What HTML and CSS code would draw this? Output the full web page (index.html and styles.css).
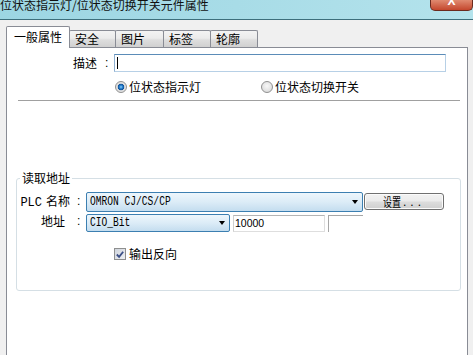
FILE: index.html
```html
<!DOCTYPE html>
<html lang="zh">
	<head>
		<meta charset="UTF-8">
		<title>位状态指示灯/位状态切换开关元件属性</title>
		<link rel="stylesheet" href="styles.css">
	</head>
	<body>
		<!--标题栏-->
		<div class="titlebar">
			<span class="title">位状态指示灯/位状态切换开关元件属性</span>
			<span class="close"><span>X</span></span>
		</div>

		<!--选项卡-->
		<div class="tabs">
			<div class="tab active">一般属性</div>
			<div class="tab t47">安全</div>
			<div class="tab t49">图片</div>
			<div class="tab t48">标签</div>
			<div class="tab t48">轮廓</div>
		</div>

		<div class="panel">
			<div class="row desc-row">
				<div class="lbl lbl-desc"><span class="lbl-text">描述</span><span class="colon">:</span></div>
				<div class="textbox"><span class="caret"></span></div>
			</div>

			<div class="row radio-row">
				<label class="radio-item first"><span class="radio checked"></span>位状态指示灯</label>
				<label class="radio-item second"><span class="radio"></span>位状态切换开关</label>
			</div>

			<div class="sep"></div>

			<fieldset class="group">
				<legend>读取地址</legend>
				<div class="row plc-row">
					<div class="lbl"><span class="lbl-text name"><span class="mono">PLC</span>名称</span><span class="colon">:</span></div>
					<div class="combo wide"><span class="combo-text">OMRON CJ/CS/CP</span><span class="arrow"></span></div>
					<div class="btn"><span class="btn-text">设置</span><span class="dots">...</span></div>
				</div>
				<div class="row addr-row">
					<div class="lbl"><span class="lbl-text addr">地址</span><span class="colon">:</span></div>
					<div class="combo narrow"><span class="combo-text">CIO_Bit</span><span class="arrow"></span></div>
					<div class="numbox">10000</div>
					<div class="stub"></div>
				</div>
				<label class="check-row"><span class="checkbox"><svg width="11" height="11" viewBox="0 0 11 11"><path d="M2 5.5 L4.5 8 L9 2.5" fill="none" stroke="#3b4f86" stroke-width="2"/></svg></span>输出反向</label>
			</fieldset>
		</div>
	</body>
</html>
```
FILE: styles.css
```css
* {
	margin: 0;
	padding: 0;
	box-sizing: border-box;
}

body {
	width: 473px;
	height: 355px;
	overflow: hidden;
	background-color: #f0f0f0;
	font: 12px "Noto Sans CJK SC", sans-serif;
	color: #000;
}

/* 标题栏 */
.titlebar {
	display: flex;
	justify-content: space-between;
	height: 20px;
	border-bottom: 1px solid #3d6f7c;
	background: linear-gradient(90deg, #9cd6e3, #a8dce7 50%, #b4e3ec);
	overflow: hidden;
}

.title {
	line-height: 12px;
	margin-top: -1px;
	color: #111;
}

.close {
	display: flex;
	justify-content: center;
	width: 43px;
	height: 11px;
	border: 1px solid #6b2a1e;
	border-top: none;
	border-radius: 0 0 5px 5px;
	background: linear-gradient(#e08a70, #c4472d);
	color: #fff;
	overflow: hidden;
}

.close span {
	font: bold 12px "Liberation Sans", sans-serif;
	line-height: 10px;
	margin-top: -4px;
}

/* 选项卡 */
.tabs {
	display: flex;
	align-items: flex-end;
	height: 27px;
	padding-left: 6px;
}

.tab {
	height: 17px;
	margin-left: -1px;
	padding: 1px 0 0 5px;
	line-height: 14px;
	border: 1px solid #898c95;
	border-bottom: none;
	border-radius: 2px 2px 0 0;
	background: linear-gradient(#f3f3f3, #ebebeb 45%, #dedede 55%, #d0d0d0);
}

.tab.active {
	position: relative;
	z-index: 1;
	width: 64px;
	height: 22px;
	margin: 0 0 -1px 0;
	padding: 3px 0 0;
	text-align: center;
	background: #fff;
}

.t47 { width: 47px; }
.t48 { width: 48px; }
.t49 { width: 49px; }

.panel {
	margin-left: 6px;
	width: 462px;
	height: 308px;
	border: 1px solid #898c95;
	border-bottom: none;
	background-color: #fff;
}

.row {
	display: flex;
	align-items: center;
}

/* 标签 + 冒号 */
.lbl {
	display: flex;
	justify-content: flex-end;
	width: 66px;
	flex-shrink: 0;
	line-height: 14px;
	white-space: nowrap;
}

.lbl-desc {
	width: 107px;
}

.colon {
	width: 9px;
	font-family: "Liberation Sans", sans-serif;
}

.lbl-desc .lbl-text { margin-right: 8px; }
.lbl-text.name { margin-right: 7px; }
.lbl-text.addr { margin-right: 12px; }

.mono {
	font-family: "Liberation Mono", monospace;
	margin-right: 4px;
}

.desc-row {
	margin-top: 6px;
	height: 18px;
}

.textbox {
	width: 332px;
	height: 18px;
	border: 1px solid;
	border-color: #5b8cb8 #b7d0e6 #b7d0e6 #8fb0d1;
	padding: 2px 0 0 2px;
}

.caret {
	display: block;
	width: 1px;
	height: 12px;
	background-color: #000;
}

/* 单选按钮 */
.radio-row {
	margin-top: 8px;
	height: 13px;
}

.radio-item {
	display: flex;
	align-items: center;
	gap: 2px;
	line-height: 14px;
}

.radio-item.first { margin-left: 108px; }
.radio-item.second { margin-left: 60px; }

.radio {
	width: 12px;
	height: 12px;
	border-radius: 50%;
	border: 1px solid #909090;
	background: radial-gradient(circle at 50% 40%, #f8f8f8, #d4d4d4);
}

.radio.checked {
	background: radial-gradient(circle at 50% 50%, #8fd0f8 0, #2c86d2 1.5px, #0e4f97 3px, #dcdcdc 3.6px, #efefef 100%);
}

.sep {
	height: 1px;
	margin: 7px 7px 0 11px;
	background-color: #a0a0a0;
}

/* 读取地址 */
.group {
	width: 445px;
	margin: 70px 0 0 9px;
	padding: 7px 0 30px 3px;
	border: 1px solid #d5dfe5;
	border-radius: 3px;
}

.group legend {
	padding: 0 2px;
	line-height: 14px;
}

.combo {
	display: flex;
	justify-content: space-between;
	align-items: center;
	height: 20px;
	padding: 0 3px 0 3px;
	border: 1px solid #3c7fb1;
	border-radius: 2px;
	background: linear-gradient(#edf6fc, #dcecf7 50%, #c4ddef);
}

.combo.wide { width: 277px; }

.combo.narrow {
	width: 144px;
	height: 18px;
}

.combo-text {
	font: 12px "Liberation Mono", monospace;
	transform: scaleX(0.8);
	transform-origin: left center;
	white-space: nowrap;
}

.arrow {
	width: 0;
	height: 0;
	border-left: 3.5px solid transparent;
	border-right: 3.5px solid transparent;
	border-top: 4px solid #000;
	margin-right: 1px;
}

.btn {
	display: flex;
	justify-content: center;
	align-items: center;
	align-self: flex-start;
	width: 80px;
	height: 17px;
	margin: 1px 0 0 1px;
	border: 1px solid #707070;
	border-radius: 3px;
	background: linear-gradient(#f2f2f2, #ebebeb 48%, #dddddd 52%, #cfcfcf);
	box-shadow: inset 0 0 0 1px #fbfbfb;
	line-height: 14px;
}

.btn-text {
	display: inline-block;
	width: 18px;
	transform: scaleX(0.75);
	transform-origin: left center;
	white-space: nowrap;
}

.dots {
	letter-spacing: 4px;
	font-family: "Liberation Sans", sans-serif;
	margin-left: 2px;
}

.addr-row {
	margin-top: 2px;
	align-items: flex-start;
}

.numbox {
	width: 92px;
	height: 17px;
	margin: 1px 0 0 3px;
	padding-left: 1px;
	border: 1px solid;
	border-color: #b4b4b4 #dedede #dedede #d0d0d0;
	font: 10.5px/15px "Liberation Sans", sans-serif;
}

.stub {
	width: 35px;
	height: 17px;
	margin: 1px 0 0 3px;
	border-top: 1px solid #a6a6a6;
	border-left: 1px solid #a6a6a6;
}

.check-row {
	display: flex;
	align-items: center;
	gap: 3px;
	margin: 15px 0 0 94px;
	height: 13px;
	line-height: 14px;
}

.checkbox {
	display: flex;
	width: 12px;
	height: 12px;
	border: 1px solid #8e8f8f;
	background: linear-gradient(135deg, #cfd4dc, #eef0f3);
}
```
